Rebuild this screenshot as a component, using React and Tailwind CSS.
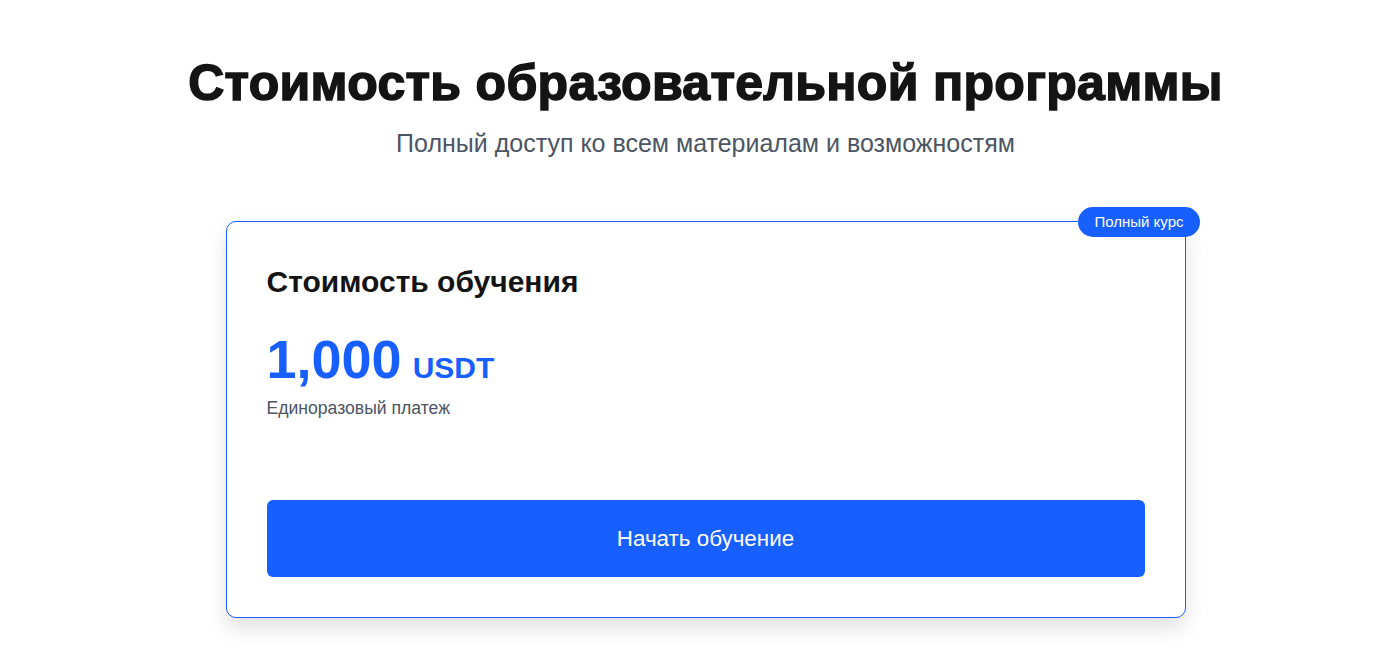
export default function App() {
  return (
    <div className="min-h-[653px] bg-white flex flex-col items-center pl-[32px]" style={{ fontFamily: '"Liberation Sans", Arial, sans-serif' }}>
      <h1 className="mt-[55px] text-[50px] leading-[56px] font-black text-[#141414] [-webkit-text-stroke:1.5px_#141414] tracking-[0.3px]">
        Стоимость образовательной программы
      </h1>
      <p className="mt-[17px] text-[25px] leading-[30px] text-[#4b5563]">
        Полный доступ ко всем материалам и возможностям
      </p>
      <div className="relative mt-[63px] w-[960px] h-[397px] rounded-[10px] border border-[#1a5cff] bg-white shadow-[0_10px_20px_rgba(0,0,0,0.12)] px-[40px] pt-[40px] pb-[40px] flex flex-col">
        <span className="absolute -top-[15px] -right-[15px] h-[30px] px-[16px] rounded-full bg-[#175fff] text-white text-[15px] flex items-center">
          Полный курс
        </span>
        <h2 className="text-[30px] leading-[40px] font-bold text-[#141414]">Стоимость обучения</h2>
        <div className="mt-[27px] flex items-baseline gap-[11px] text-[#175fff] font-bold">
          <span className="text-[54px] leading-[60px]">1,000</span>
          <span className="text-[30px] leading-[32px]">USDT</span>
        </div>
        <p className="mt-[7px] text-[17.6px] leading-[24px] text-[#4b5563]">Единоразовый платеж</p>
        <button className="mt-auto h-[77px] w-full rounded-[6px] bg-[#175fff] text-white text-[22.4px]">
          Начать обучение
        </button>
      </div>
    </div>
  );
}
